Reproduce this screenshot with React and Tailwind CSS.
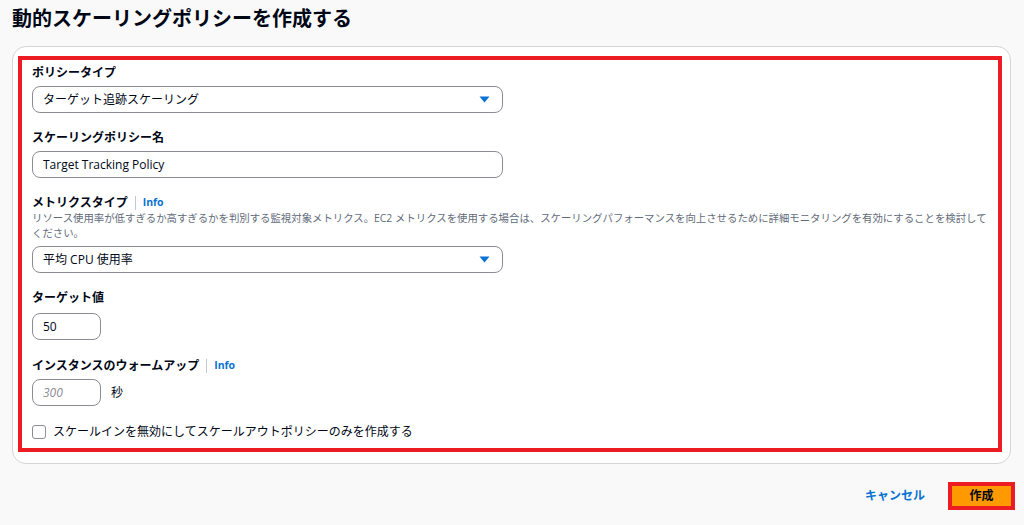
import React from "react";

const font = { fontFamily: '"Open Sans", "Noto Sans CJK JP", sans-serif' };

// small blue caret used in the selects
const Caret = () => (
  <svg width="11" height="7" viewBox="0 0 11 7" className="shrink-0">
    <path d="M0.5 0.5 L10.5 0.5 L5.5 6.5 Z" fill="#0972d3" />
  </svg>
);

const Label = ({ children, info, className = "" }) => (
  <div className={`flex items-center h-4 text-[12px] font-bold text-[#000716] ${className}`}>
    <span>{children}</span>
    {info && (
      <>
        <span className="mx-[7px] w-px h-[14px] bg-[#c6c6cd]" />
        <span className="text-[10.5px] text-[#0972d3]">Info</span>
      </>
    )}
  </div>
);

const Select = ({ value, className = "" }) => (
  <div
    className={`w-[471px] h-[27px] rounded-[8px] border border-[#8c8c94] bg-white flex items-center justify-between pl-[10px] pr-[12px] text-[12px] text-[#000716] ${className}`}
  >
    <span>{value}</span>
    <Caret />
  </div>
);

const App = () => {
  return (
    <div className="w-full h-[525px] bg-[#f9f9f9] overflow-hidden" style={font}>
      <h1 className="pl-3 pt-[5px] text-[20px] leading-[28px] font-bold text-[#000716]">
        動的スケーリングポリシーを作成する
      </h1>

      {/* card */}
      <div className="ml-3 mr-[13px] mt-[13px] rounded-[14px] border border-[#d5d5d8] bg-white pt-[9px] pl-[5px] pr-[8px] pb-[11px]">
        {/* highlight box */}
        <div className="border-4 border-[#ec1c24] pl-[10px] pt-[5px] pb-[7px]">
          <Label>ポリシータイプ</Label>
          <Select value="ターゲット追跡スケーリング" className="mt-[5px]" />

          <Label className="mt-[17px]">スケーリングポリシー名</Label>
          <div className="mt-[5px] w-[471px] h-[27px] rounded-[8px] border border-[#8c8c94] flex items-center pl-[10px] text-[12px] text-[#000716]">
            Target Tracking Policy
          </div>

          <Label info className="mt-[17px]">メトリクスタイプ</Label>
          <p className="text-[10.4px] leading-[15px] text-[#5f6b7a] whitespace-nowrap">
            リソース使用率が低すぎるか高すぎるかを判別する監視対象メトリクス。EC2 メトリクスを使用する場合は、スケーリングパフォーマンスを向上させるために詳細モニタリングを有効にすることを検討して
            <br />
            ください。
          </p>
          <Select value="平均 CPU 使用率" className="mt-[5px]" />

          <Label className="mt-[17px]">ターゲット値</Label>
          <div className="mt-[7px] w-[69px] h-[27px] rounded-[8px] border border-[#8c8c94] flex items-center pl-[10px] text-[12px] text-[#000716]">
            50
          </div>

          <Label info className="mt-[18px]">インスタンスのウォームアップ</Label>
          <div className="mt-[5px] flex items-center">
            <div className="w-[69px] h-[27px] rounded-[8px] border border-[#8c8c94] flex items-center pl-[10px] text-[12px] italic text-[#8c8c94]">
              300
            </div>
            <span className="ml-[10px] text-[12px] text-[#000716]">秒</span>
          </div>

          <label className="mt-[17px] flex items-center gap-[7px] text-[12px] text-[#000716]">
            <span className="w-[14px] h-[14px] rounded-[3px] border border-[#8c8c94] bg-white" />
            スケールインを無効にしてスケールアウトポリシーのみを作成する
          </label>
        </div>
      </div>

      {/* footer actions */}
      <div className="mt-[18px] pr-[9px] flex items-center justify-end">
        <button className="text-[12px] font-bold text-[#0972d3] mr-[23px]">キャンセル</button>
        <div className="border-4 border-[#ec1c24]">
          <button className="w-[59px] h-[20px] bg-[#ff9900] text-[12px] font-bold text-[#000716] flex items-center justify-center">
            作成
          </button>
        </div>
      </div>
    </div>
  );
};

export default App;
